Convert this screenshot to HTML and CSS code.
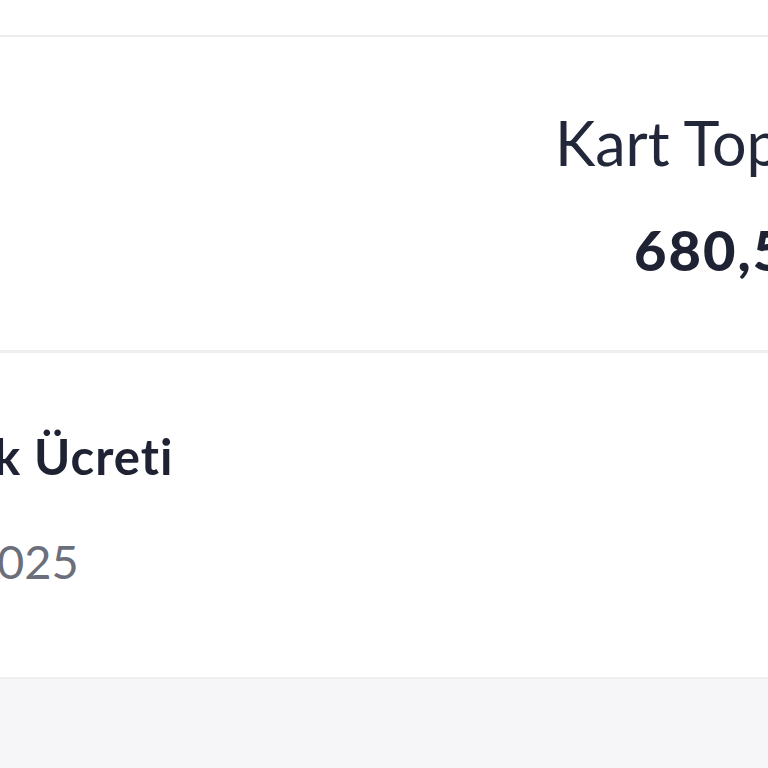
FILE: index.html
```html
<!DOCTYPE html>
<html lang="tr">
<head>
<meta charset="utf-8">
<link rel="stylesheet" href="styles.css">
</head>
<body>
<div class="page">
  <header class="topbar"></header>
  <section class="summary">
    <div class="summary-label">Kart Top</div>
    <div class="summary-value"><span class="int">680</span>,5</div>
  </section>
  <section class="item">
    <div class="item-title">k Ücreti</div>
    <div class="item-date">025</div>
  </section>
  <div class="rest"></div>
</div>
</body>
</html>
```
FILE: styles.css
```css
html, body {
  margin: 0;
  padding: 0;
  background: #f6f6f8;
  font-family: "Lato", "Noto Sans", sans-serif;
  color: #1f2335;
}
.page {
  width: 768px;
  height: 768px;
  overflow: hidden;
  display: flex;
  flex-direction: column;
}
.topbar {
  height: 35px;
  background: #ffffff;
  border-bottom: 2px solid #ececef;
  flex: none;
}
.summary {
  background: #ffffff;
  border-bottom: 3px solid #efeff2;
  padding-left: 555px;
  box-sizing: border-box;
  white-space: nowrap;
  display: flex;
  flex-direction: column;
  flex: none;
  height: 316px;
}
.summary-label {
  font-size: 61px;
  font-weight: 400;
  line-height: 60px;
  margin-top: 76px;
  color: #23273a;
}
.summary-value {
  font-size: 56px;
  font-weight: 900;
  line-height: 54px;
  margin-top: 50px;
  padding-left: 79px;
  letter-spacing: 2px;
  color: #1e2233;
}
.summary-value .int {
  letter-spacing: 2px;
}
.item {
  background: #ffffff;
  height: 326px;
  border-bottom: 2px solid #efeff2;
  box-sizing: border-box;
  white-space: nowrap;
  display: flex;
  flex-direction: column;
  flex: none;
}
.item-title {
  font-size: 49px;
  font-weight: 700;
  line-height: 48px;
  margin-top: 79px;
  margin-left: -6px;
  letter-spacing: 1px;
  color: #1e2233;
}
.item-date {
  font-size: 47px;
  font-weight: 400;
  line-height: 47px;
  margin-top: 58px;
  margin-left: -3px;
  color: #6b6f7b;
}
.rest {
  flex: 1;
}
```
